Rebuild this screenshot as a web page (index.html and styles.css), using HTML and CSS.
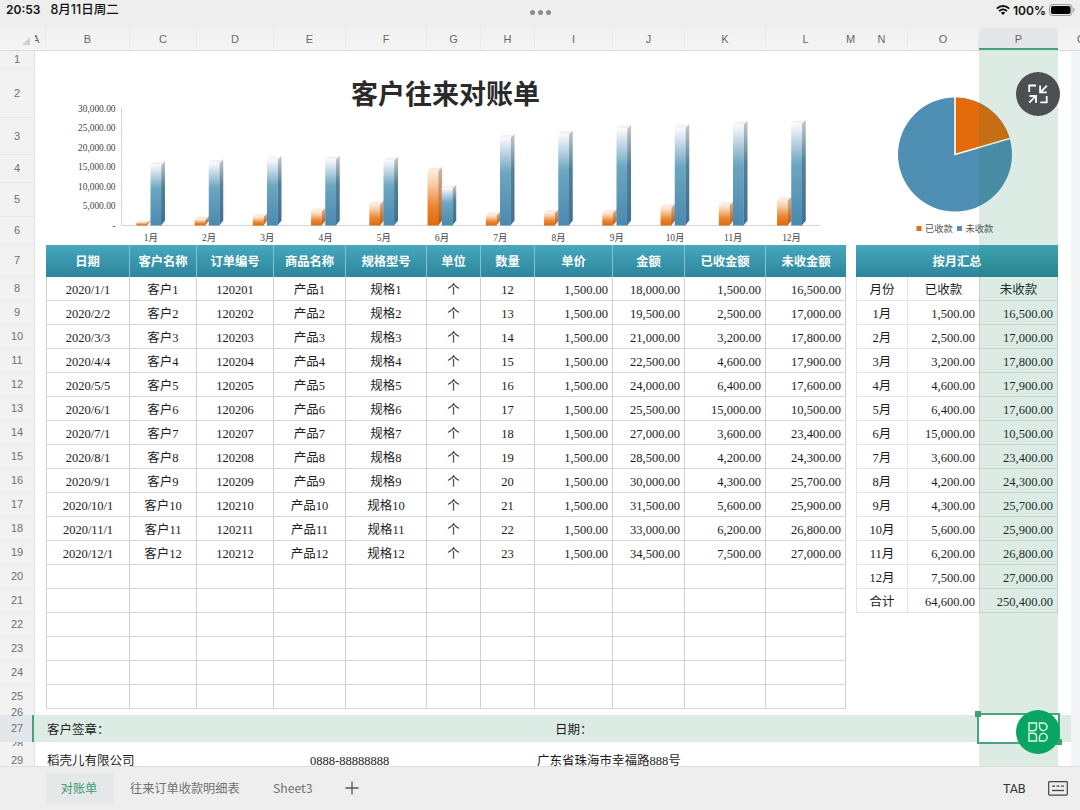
FILE: index.html
```html
<!DOCTYPE html>
<html lang="zh-CN">
<head>
<meta charset="utf-8">
<title>客户往来对账单</title>
<link rel="stylesheet" href="styles.css">
</head>
<body>
<div class="app">
  <header class="status">
    <div class="status-left"><span>20:53</span><span>8月11日周二</span></div>
    <div class="dots"><i></i><i></i><i></i></div>
    <div class="status-right">
      <svg class="wifi" viewBox="0 0 14 10" width="14" height="10"><g fill="none" stroke="#111" stroke-width="1.9"><path d="M.8 3.6C4.4.2 9.6.2 13.2 3.6"/><path d="M3 6.1C5.3 4 8.700 4 11 6.100"/></g><path d="M4.800 7.700Q7 6 9.200 7.700L7 10z" fill="#111"/></svg>
      <span>100%</span>
      <svg class="battery" viewBox="0 0 26 12" width="26" height="12"><rect x=".5" y=".5" width="22.500" height="11" rx="3" fill="none" stroke="#999"/><rect x="2" y="2" width="19.500" height="8" rx="1.800" fill="#000"/><path d="M24.300 4v4q1.400-.6 1.400-2t-1.400-2z" fill="#999"/></svg>
    </div>
  </header>

  <div class="colheads" id="colheads"><svg class="corner" width="8" height="8" viewBox="0 0 8 8"><path d="M8 0V8H0z" fill="#cfcfcf"/></svg></div>

  <main class="main">
    <div class="rowheads" id="rowheads"></div>
    <section class="sheet">
      <div class="top">
        <div class="chart-area">
          <h1 class="title">客户往来对账单</h1>
          <svg class="bars" id="bars" width="799" height="142" viewBox="46 103 799 142">
            <defs>
              <linearGradient id="bf" x1="0" y1="0" x2="0" y2="1"><stop offset="0" stop-color="#fbfcff"/><stop offset=".12" stop-color="#d3e1ec"/><stop offset=".4" stop-color="#6ca6c0"/><stop offset="1" stop-color="#4a89b0"/></linearGradient>
              <linearGradient id="bs" x1="0" y1="0" x2="0" y2="1"><stop offset="0" stop-color="#c9c9c9"/><stop offset=".4" stop-color="#557f98"/><stop offset="1" stop-color="#3f6f92"/></linearGradient>
              <linearGradient id="of" x1="0" y1="0" x2="0" y2="1"><stop offset="0" stop-color="#fdeee2"/><stop offset=".25" stop-color="#f7cda8"/><stop offset=".65" stop-color="#ec8430"/><stop offset="1" stop-color="#df690d"/></linearGradient>
              <linearGradient id="os" x1="0" y1="0" x2="0" y2="1"><stop offset="0" stop-color="#c9bdb4"/><stop offset=".45" stop-color="#c98b58"/><stop offset="1" stop-color="#b5560e"/></linearGradient>
            </defs>
          </svg>
        </div>
        <div class="pie-area">
          <svg width="202" height="194" viewBox="856 51 202 194">
            <circle cx="955" cy="154.500" r="57" fill="#4f8fb3"/>
            <path d="M955 154.500V97.500A57 57 0 0 1 1009.700 138.500z" fill="#e46b0a"/>
            <path d="M955 97V154.500L1010.500 138.300" fill="none" stroke="#fff" stroke-width="1.600"/>
            <rect x="916.500" y="226" width="5" height="5" fill="#e1700f"/>
            <rect x="957" y="226" width="5" height="5" fill="#5b8fb5"/>
            <text class="legend" x="925" y="231.800">已收款</text>
            <text class="legend" x="965.500" y="231.800">未收款</text>
          </svg>
        </div>
      </div>
      <div class="tables">
        <div class="ledger" id="ledger"></div>
        <div class="summary" id="summary"></div>
      </div>
      <div class="gap"></div>
      <div class="sign"><span>客户签章：</span><span>日期：</span></div>
      <div class="company"><span>稻壳儿有限公司</span><span>0888-88888888</span><span>广东省珠海市幸福路888号</span></div>
      <div class="col-mark"></div>
      <div class="selection"><i></i><i></i></div>
    </section>
  </main>

  <footer class="tabs">
    <div class="tab active">对账单</div>
    <div class="tab second">往来订单收款明细表</div>
    <div class="tab third">Sheet3</div>
    <svg class="plus" width="14" height="14" viewBox="0 0 14 14"><path d="M7 .5v13M.5 7h13" stroke="#555" stroke-width="1.300"/></svg>
    <div class="tabkey">TAB</div>
    <svg class="keyboard" width="20" height="15" viewBox="0 0 20 15"><g fill="none" stroke="#444"><rect x=".7" y=".7" width="18.600" height="13.400" rx=".8" stroke-width="1.200"/><path d="M4 5.200h12" stroke-width="1.300" stroke-dasharray="3 1.500"/><path d="M4 9.500h12" stroke-width="1.300"/></g></svg>
  </footer>

  <div class="round shrink">
    <svg width="20" height="20" viewBox="0 0 20 20"><g fill="none" stroke="#fff" stroke-width="1.800"><path d="M1.200 8V1.500H8"/><path d="M12.300 18.300H18.700V12"/><path d="M19 1.700L12.500 8.100M12.100 1.500V8.400H18.800"/><path d="M1.200 18.600L7.500 12.300M1.500 12H8V18.800"/></g></svg>
  </div>
  <div class="round tools">
    <svg width="20" height="20" viewBox="0 0 20 20"><g fill="none" stroke="#dff7ea" stroke-width="1.400"><path d="M1 1H8.500V5.500Q8.500 8.700 5.300 8.700H1z"/><path d="M11.500 1H15A3.800 3.800 0 1 1 11.500 4.800z"/><path d="M1 11.300H5.300Q8.500 11.300 8.500 14.500V19H1z"/><path d="M11.500 19V15.100A3.800 3.800 0 1 1 15.300 19z"/></g></svg>
  </div>
</div>
<script src="script.js"></script>
</body>
</html>
```
FILE: styles.css
```css
* { box-sizing: border-box; }
body { margin: 0; background: #eee; font-family: Inter, "Noto Sans CJK SC", sans-serif; }
.app { position: relative; width: 1080px; height: 810px; overflow: hidden; background: #eee; }

.status { display: grid; grid-template-columns: 1fr auto 1fr; height: 28px; padding: 0 6px; align-items: start; font-size: 12px; font-weight: 600; color: #111; }
.status-left { display: flex; gap: 10px; line-height: 20px; }
.status-left span + span { font: 500 12.5px/20px Inter, "Noto Sans CJK SC", sans-serif; }
.status-right { display: flex; justify-content: flex-end; align-items: center; height: 20px; gap: 3px; }
.battery { margin-right: -1px; }
.dots { display: flex; gap: 3px; padding-top: 10px; }
.dots i { width: 5px; height: 5px; border-radius: 50%; background: #8b8b8b; }

.colheads { display: flex; height: 23px; background: linear-gradient(#f1f1f1, #f4f4f4); border-bottom: 1px solid #dcdcdc; font: 11px "Liberation Sans", sans-serif; color: #686868; }
.corner { flex: none; margin: 9px 5px 0 22px; }
.colhead { flex: none; display: flex; align-items: center; justify-content: center; border-right: 1px solid #eaeaea; height: 22px; padding-bottom: 1px; }
.colhead.narrow { border-right-color: transparent; }
.colhead.first { justify-content: flex-start; text-indent: -3px; overflow: hidden; }
.colhead.selected { background: #e4e6e9; border-right: 0; border-bottom: 2px solid #43a47a; border-radius: 4px 4px 0 0; padding: 1px 0 0; }
.colhead.edge { justify-content: flex-start; padding-left: 19px; border-right: 0; }

.main { display: flex; height: 715px; background: #f3f4f6; }
.rowheads { width: 35px; background: #f2f2f2; border-right: 1px solid #e0e0e0; overflow: hidden; font: 11px "Liberation Sans", sans-serif; color: #707070; }
.rowhead { display: flex; align-items: center; justify-content: center; padding-bottom: 1px; border-bottom: 1px solid #e8e8e8; }
.rowhead.short { border-bottom: 0; }
.rowhead.tall { padding-bottom: 2px; }
.rowhead.clip { overflow: hidden; }
.rowhead.selected { background: #e3e7eb; border-right: 2px solid #43a47a; padding-left: 2px; border-bottom: 0; }

.sheet { position: relative; width: 1036px; height: 715px; overflow: hidden; background: #fff; font: 12.5px/16px "Liberation Serif", "Noto Sans CJK SC", serif; color: #1c1c1c; }
.top { display: flex; height: 194px; padding-left: 11px; }
.chart-area { width: 799px; }
.title { margin: 0; height: 52px; padding-top: 15px; text-align: center; font: 700 27px/54px "Noto Sans CJK SC", sans-serif; color: #2a2a2a; }
.bars { display: block; }
.bars text { font-size: 9.4px; fill: #444; }
.pie-area { margin-left: 11px; }
.pie-area svg { display: block; }
.legend { font: 9.3px "Noto Sans CJK SC", sans-serif; fill: #555; }

.tables { display: flex; align-items: flex-start; gap: 10px; height: 464px; padding-left: 11px; }
.ledger { display: grid; grid-template-columns: 84px 67px 77px 72px 81px 54px 54px 78px 72px 81px 80px; grid-template-rows: 32px; grid-auto-rows: 24px; }
.summary { display: grid; grid-template-columns: 52px 72px 78px; grid-template-rows: 32px; grid-auto-rows: 24px; }
.cell { display: flex; align-items: center; justify-content: center; padding-top: 3px; border-right: 1px solid #d0d0d0; border-bottom: 1px solid #d6d6d6; white-space: nowrap; }
.cell.left { border-left: 1px solid #d0d0d0; }
.cell.num { justify-content: flex-end; padding-right: 4px; }
.summary .cell { border-color: #e3e3e3; }
.cell.head, .summary .cell.head { padding: 0 0 1px; background: linear-gradient(#47a8be, #2c859b); border-color: #82c3d1; border-bottom: 0; border-left: 0; color: #fff; font: 700 12.3px/18px "Noto Sans CJK SC", sans-serif; }
.cell.head.last { border-right: 0; }
.summary .cell.head { grid-column: span 3; border: 0; }
.gap { height: 6px; }
.sign, .company { display: grid; align-items: center; padding-left: 12px; }
.sign { grid-template-columns: 508px 1fr; height: 27px; padding-top: 2px; background: #dcece4; }
.company { grid-template-columns: 263px 227px 1fr; height: 38px; }

.col-mark { position: absolute; left: 944px; top: 0; width: 79px; height: 715px; background: rgba(22, 128, 75, .15); }
.selection { position: absolute; left: 942px; top: 662px; width: 83px; height: 31px; border: 2px solid #4aa57c; background: #fff; }
.selection i { position: absolute; width: 6px; height: 6px; background: #3fa074; }
.selection i:first-child { left: -4px; top: -4px; }
.selection i:last-child { right: -4px; bottom: -3px; }

.tabs { display: flex; align-items: center; height: 44px; padding: 0 0 1px 46px; border-top: 1px solid #dedede; background: #eee; font: 12.2px "Noto Sans CJK SC", sans-serif; color: #707070; }
.tab { height: 31px; line-height: 31px; }
.tab.active { width: 68px; padding-right: 2px; text-align: center; background: #e4e8e9; color: #389c70; }
.tab.second { width: 143px; padding-left: 16px; }
.tab.third { width: 72px; padding-left: 16px; }
.tabkey { margin-left: 644px; font: 12.6px Roboto, sans-serif; letter-spacing: -.3px; color: #333; }
.plus { margin-left: 16px; }
.keyboard { margin-left: auto; margin-right: 12px; }

.round { position: absolute; display: flex; align-items: center; justify-content: center; width: 44px; height: 44px; border-radius: 50%; }
.shrink { left: 1016px; top: 72px; background: #4c5053; }
.tools { left: 1016px; top: 710px; background: #09a663; }
```
FILE: script.js
```js
const el = (parent, cls, text, style) => {
  const d = document.createElement('div');
  d.className = cls;
  d.textContent = text;
  if (style) d.style.cssText = style;
  parent.append(d);
  return d;
};

// Column headings
const heads = document.getElementById('colheads');
const cols = [['A', 11], ['B', 84], ['C', 67], ['D', 77], ['E', 72], ['F', 81], ['G', 54], ['H', 54], ['I', 78],
  ['J', 72], ['K', 81], ['L', 80], ['M', 10], ['N', 52], ['O', 71], ['P', 79], ['Q', 46]];
const kinds = { P: ' selected', A: ' first', L: ' narrow', M: ' narrow', Q: ' edge' };
for (const [name, w] of cols) el(heads, 'colhead' + (kinds[name] || ''), name, `width:${w}px`);

// Row headings
const rows = document.getElementById('rowheads');
const heights = [18, 49, 37, 28, 34, 28, 32];
for (let r = 8; r <= 25; r++) heights.push(24);
heights.push(6, 27, 4, 29);
heights.forEach((h, i) => {
  const n = i + 1;
  const cls = n === 27 ? ' selected' : n === 28 ? ' clip short' : n === 26 ? ' short' : n === 25 ? ' short tall' : '';
  el(rows, 'rowhead' + cls, n, `height:${h}px`);
});

const money = n => n.toLocaleString('en-US', { minimumFractionDigits: 2 });
const received = [1500, 2500, 3200, 4600, 6400, 15000, 3600, 4200, 4300, 5600, 6200, 7500];
const dates = ['1/1', '2/2', '3/3', '4/4', '5/5', '6/1', '7/1', '8/1', '9/1', '10/1', '11/1', '12/1'];

// Ledger
const ledger = document.getElementById('ledger');
['日期', '客户名称', '订单编号', '商品名称', '规格型号', '单位', '数量', '单价', '金额', '已收金额', '未收金额']
  .forEach((t, i) => el(ledger, 'cell head' + (i === 10 ? ' last' : ''), t));
for (let i = 0; i < 18; i++) {
  const n = i + 1;
  const total = 1500 * (12 + i);
  const values = i < 12
    ? ['2020/' + dates[i], '客户' + n, String(120200 + n), '产品' + n, '规格' + n, '个', 12 + i,
      money(1500), money(total), money(received[i]), money(total - received[i])]
    : Array(11).fill('');
  values.forEach((v, c) => el(ledger, 'cell' + (c === 0 ? ' left' : c > 6 ? ' num' : ''), v));
}

// Monthly summary
const summary = document.getElementById('summary');
el(summary, 'cell head', '按月汇总');
['月份', '已收款', '未收款'].forEach((t, c) => el(summary, 'cell' + (c ? '' : ' left'), t));
const line = (name, a, b) => {
  el(summary, 'cell left', name);
  el(summary, 'cell num', money(a));
  el(summary, 'cell num', money(b));
};
received.forEach((v, i) => line(i + 1 + '月', v, 1500 * (12 + i) - v));
line('合计', 64600, 250400);

// Column chart
const base = 225.5;
const scale = 117.5 / 30000;
let out = '<path d="M121.500 108V225.500H820.500" fill="none" stroke="#d6d6d6"/>';
['30,000.00', '25,000.00', '20,000.00', '15,000.00', '10,000.00', '5,000.00', '-'].forEach((t, i) => {
  out += `<text x="115.500" y="${111.5 + i * 19.55}" text-anchor="end">${t}</text>`;
});
const bar = (x, value, k) => {
  const top = base - value * scale;
  const d = Math.min(4, value * scale / 2);
  return `<path d="M${x + 10.5} ${top + d}L${x + 14.5} ${top}V${base - 5 > top ? base - 5 : base - 2}L${x + 10.5} ${base}z" fill="url(#${k}s)"/>` +
    `<path d="M${x} ${top + d}L${x + 3} ${top + 1}H${x + 14}L${x + 10.5} ${top + d}z" fill="${k === 'b' ? '#eef1f6' : '#fbe9dc'}"/>` +
    `<rect x="${x}" y="${top + d - .5}" width="10.800" height="${base - top - d + .5}" fill="url(#${k}f)"/>`;
};
received.forEach((v, i) => {
  const x = 136.3 + i * 58.25;
  out += bar(x, v, 'o') + bar(x + 14.2, 1500 * (12 + i) - v, 'b');
  out += `<text x="${150.8 + i * 58.25}" y="240.500" text-anchor="middle">${i + 1}月</text>`;
});
document.getElementById('bars').insertAdjacentHTML('beforeend', out);
```
